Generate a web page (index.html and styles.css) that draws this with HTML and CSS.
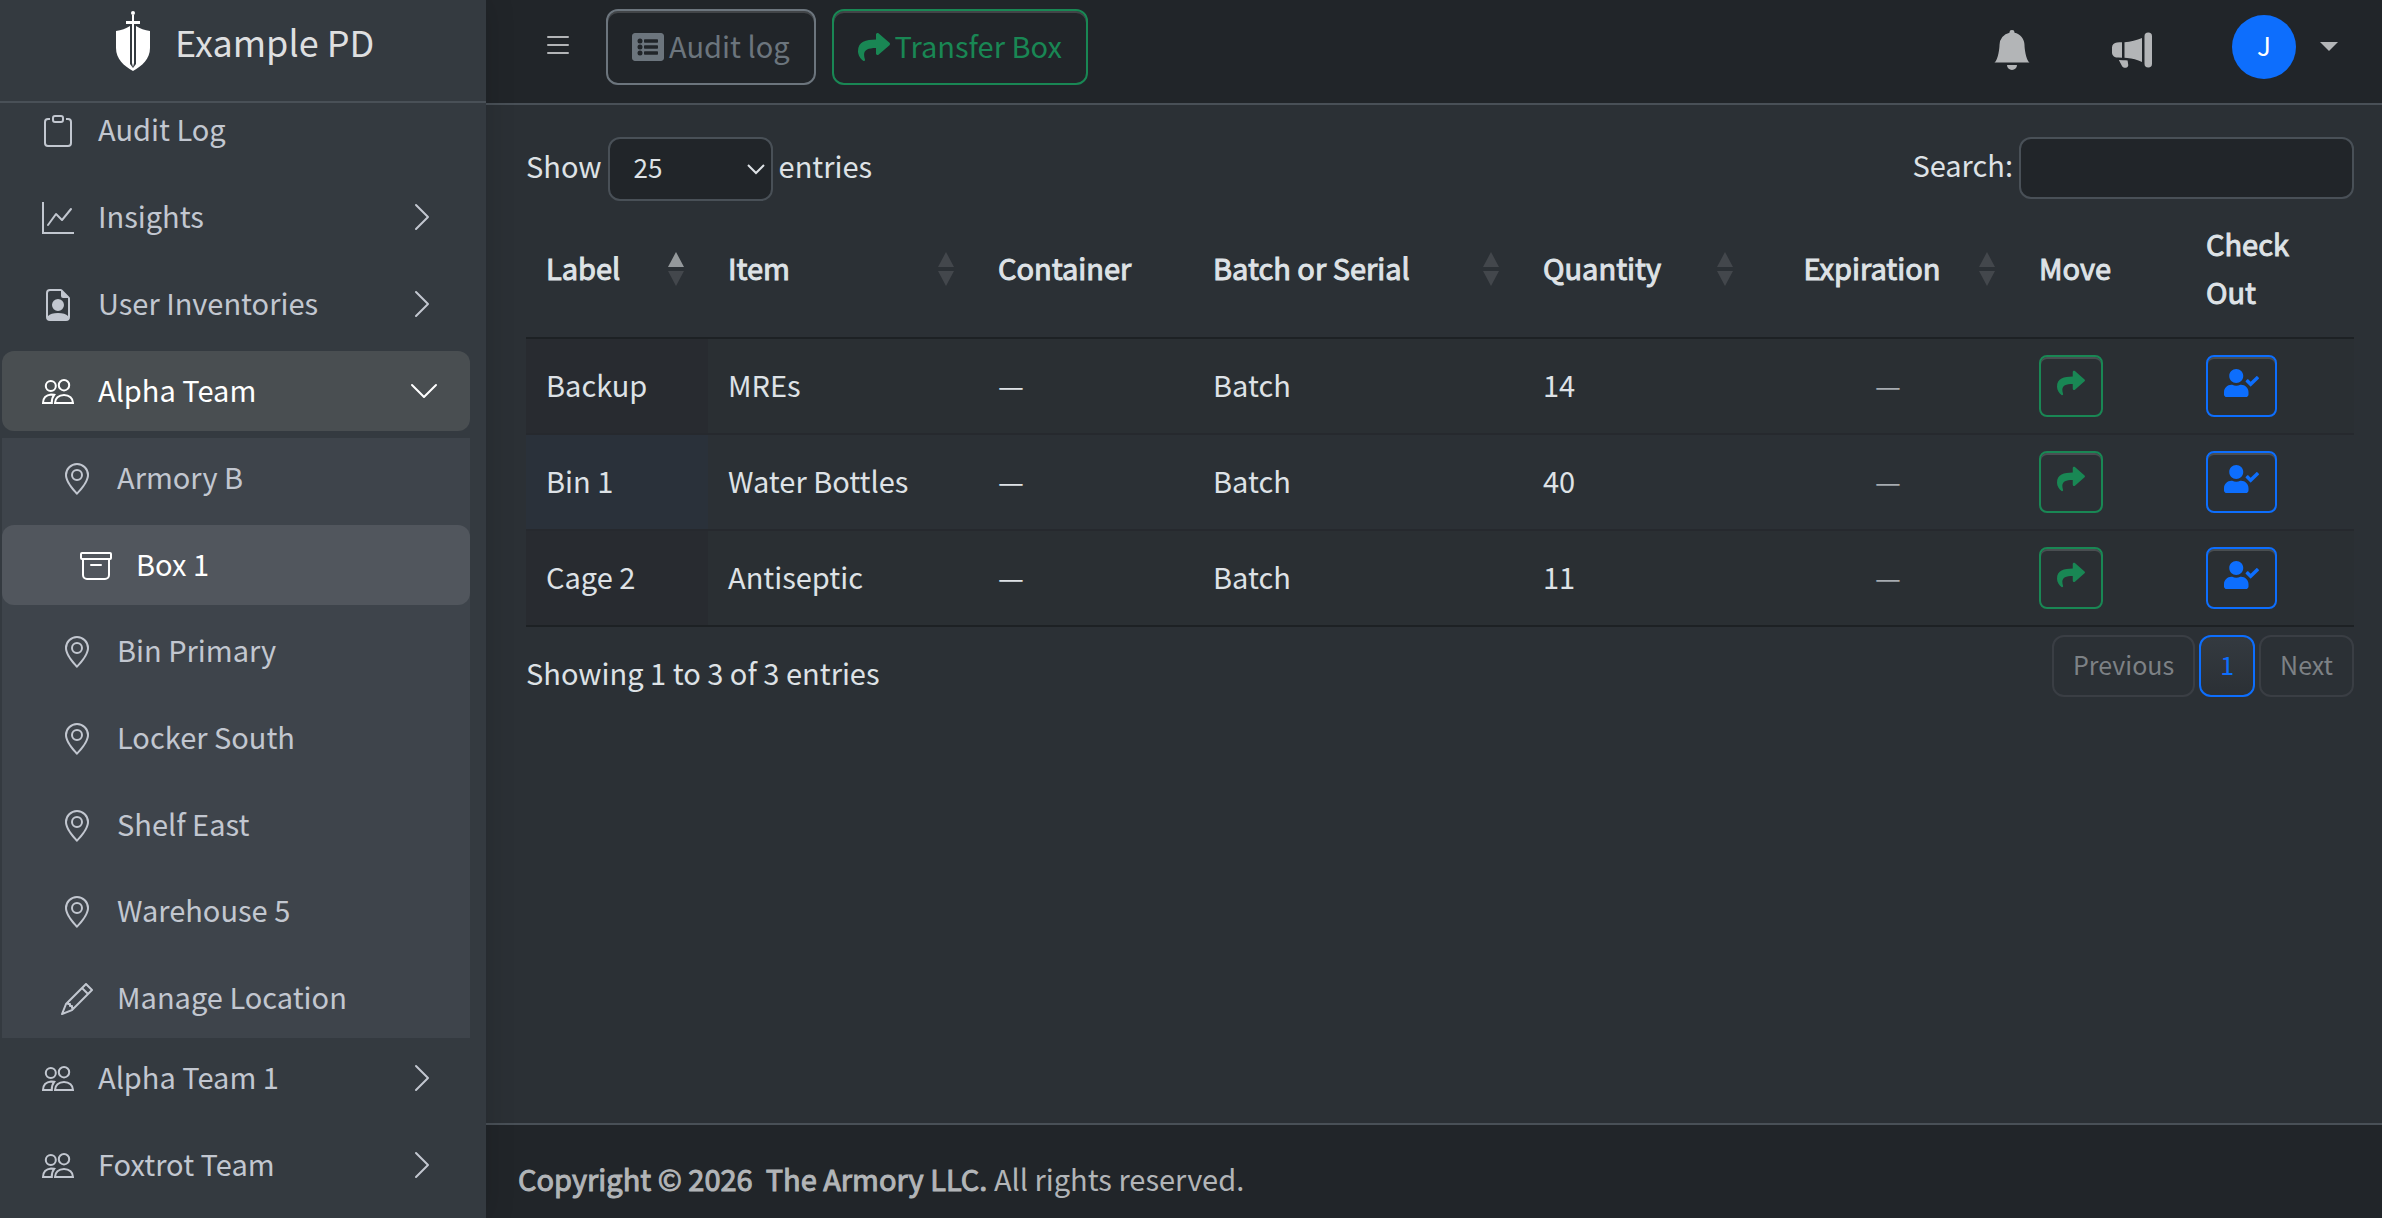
FILE: index.html
```html
<!DOCTYPE html>
<html lang="en">
<head>
<meta charset="utf-8">
<meta name="viewport" content="width=device-width, initial-scale=1">
<title>Box 1 - Example PD</title>
<link rel="stylesheet" href="styles.css">
</head>
<body>
<svg class="sprite" aria-hidden="true">
  <symbol id="chevron" viewBox="0 0 16 16"><path fill-rule="evenodd" d="M4.646 1.646a.5.5 0 0 1 .708 0l6 6a.5.5 0 0 1 0 .708l-6 6a.5.5 0 0 1-.708-.708L10.293 8 4.646 2.354a.5.5 0 0 1 0-.708"/></symbol>
  <symbol id="clipboard" viewBox="0 0 16 16"><path d="M4 1.5H3a2 2 0 0 0-2 2V14a2 2 0 0 0 2 2h10a2 2 0 0 0 2-2V3.500a2 2 0 0 0-2-2h-1v1h1a1 1 0 0 1 1 1V14a1 1 0 0 1-1 1H3a1 1 0 0 1-1-1V3.500a1 1 0 0 1 1-1h1z"/><path d="M9.500 1a.5.5 0 0 1 .5.5v1a.5.5 0 0 1-.5.5h-3a.5.5 0 0 1-.5-.5v-1a.5.5 0 0 1 .5-.5zm-3-1A1.500 1.500 0 0 0 5 1.500v1A1.500 1.500 0 0 0 6.500 4h3A1.500 1.500 0 0 0 11 2.500v-1A1.500 1.500 0 0 0 9.500 0z"/></symbol>
  <symbol id="graph" viewBox="0 0 16 16"><path fill-rule="evenodd" d="M0 0h1v15h15v1H0zm14.817 3.113a.5.5 0 0 1 .07.704l-4.500 5.500a.5.5 0 0 1-.74.037L7.060 6.767l-3.656 5.027a.5.5 0 0 1-.808-.588l4-5.500a.5.5 0 0 1 .758-.06l2.609 2.610 4.150-5.073a.5.5 0 0 1 .704-.07"/></symbol>
  <symbol id="file-person" viewBox="0 0 16 16"><path d="M9.293 0H4a2 2 0 0 0-2 2v12a2 2 0 0 0 2 2h8a2 2 0 0 0 2-2V4.707A1 1 0 0 0 13.707 4L10 .293A1 1 0 0 0 9.293 0M9.500 1v2.500a1 1 0 0 0 1 1H13v8.950C12.100 12.500 10.400 12 8 12s-4.100.5-5 1.450V2a1 1 0 0 1 1-1zM11 8a3 3 0 1 1-6 0 3 3 0 0 1 6 0" fill-rule="evenodd"/></symbol>
  <symbol id="people" viewBox="0 0 16 16"><g fill="none" stroke="currentColor"><circle cx="4.400" cy="5" r="2.500"/><circle cx="11" cy="4.600" r="2.600"/><path d="M6.500 13.500h9c0-2.200-1.800-4-4.500-4s-4.500 1.800-4.500 4zM4.900 13.500H.5c0-2.400 1.500-4.100 4-4.300.6 0 1.100.1 1.600.2-.8 1-1.300 2.500-1.200 4.100z"/></g></symbol>
  <symbol id="pin" viewBox="0 0 16 16"><path d="M12.166 8.940c-.524 1.062-1.234 2.120-1.960 3.070A32 32 0 0 1 8 14.580a32 32 0 0 1-2.206-2.570c-.726-.95-1.436-2.008-1.960-3.070C3.304 7.867 3 6.862 3 6a5 5 0 0 1 10 0c0 .862-.305 1.867-.834 2.940M8 16s6-5.686 6-10A6 6 0 0 0 2 6c0 4.314 6 10 6 10"/><path d="M8 8a2 2 0 1 1 0-4 2 2 0 0 1 0 4m0 1a3 3 0 1 0 0-6 3 3 0 0 0 0 6"/></symbol>
  <symbol id="archive" viewBox="0 0 16 16"><path d="M0 2a1 1 0 0 1 1-1h14a1 1 0 0 1 1 1v2a1 1 0 0 1-1 1v7.500a2.500 2.500 0 0 1-2.500 2.500h-9A2.500 2.500 0 0 1 1 12.500V5a1 1 0 0 1-1-1zm2 3v7.500A1.500 1.500 0 0 0 3.500 14h9a1.500 1.500 0 0 0 1.500-1.500V5zm13-3H1v2h14zM5 7.500a.5.5 0 0 1 .5-.5h5a.5.5 0 0 1 0 1h-5a.5.5 0 0 1-.5-.5"/></symbol>
  <symbol id="pencil" viewBox="0 0 16 16"><path d="M12.146.146a.5.5 0 0 1 .708 0l3 3a.5.5 0 0 1 0 .708l-10 10a.5.5 0 0 1-.168.110l-5 2a.5.5 0 0 1-.65-.65l2-5a.5.5 0 0 1 .110-.168zM11.207 2.500 13.500 4.793 14.793 3.500 12.500 1.207zm1.586 3L10.500 3.207 4 9.707V10h.5a.5.5 0 0 1 .5.5v.5h.5a.5.5 0 0 1 .5.5v.5h.293zm-9.761 5.175-.106.106-1.528 3.821 3.821-1.528.106-.106A.5.5 0 0 1 5 12.500V12h-.5a.5.5 0 0 1-.5-.5V11h-.5a.5.5 0 0 1-.468-.325"/></symbol>
  <symbol id="list" viewBox="0 0 16 16"><path fill-rule="evenodd" d="M2.500 12a.5.5 0 0 1 .5-.5h10a.5.5 0 0 1 0 1H3a.5.5 0 0 1-.5-.5m0-4a.5.5 0 0 1 .5-.5h10a.5.5 0 0 1 0 1H3a.5.5 0 0 1-.5-.5m0-4a.5.5 0 0 1 .5-.5h10a.5.5 0 0 1 0 1H3a.5.5 0 0 1-.5-.5"/></symbol>
  <symbol id="bell" viewBox="0 0 16 16"><path d="M8 16a2 2 0 0 0 2-2H6a2 2 0 0 0 2 2m.995-14.901a1 1 0 1 0-1.990 0A5 5 0 0 0 3 6c0 1.098-.5 6-2 7h14c-1.500-1-2-5.902-2-7 0-2.420-1.720-4.440-4.005-4.901"/></symbol>
  <symbol id="megaphone" viewBox="0 0 16 16"><path d="M13 2.500a1.500 1.500 0 0 1 3 0v11a1.500 1.500 0 0 1-3 0zm-1 .724c-2.067.95-4.539 1.481-7 1.656v6.237a25 25 0 0 1 1.088.085c2.053.204 4.038.668 5.912 1.560zm-8 7.841V4.934c-.68.027-1.399.043-2.008.053A2.020 2.020 0 0 0 0 7v2c0 1.106.896 1.996 1.994 2.009l.496.008a64 64 0 0 1 1.510.048m1.390 1.081q.428.032.85.078l.253 1.690a1 1 0 0 1-.983 1.187h-.548a1 1 0 0 1-.916-.599l-1.314-2.480a66 66 0 0 1 1.692.064q.491.026.966.060"/></symbol>
  <symbol id="list-alt" viewBox="0 0 512 512"><path fill-rule="evenodd" d="M464 480H48c-26.510 0-48-21.490-48-48V80c0-26.510 21.490-48 48-48h416c26.510 0 48 21.490 48 48v352c0 26.510-21.490 48-48 48zM128 120a40 40 0 1 0 0 80 40 40 0 0 0 0-80zm0 96a40 40 0 1 0 0 80 40 40 0 0 0 0-80zm0 96a40 40 0 1 0 0 80 40 40 0 0 0 0-80zM204 132a12 12 0 0 0-12 12v32a12 12 0 0 0 12 12h200a12 12 0 0 0 12-12v-32a12 12 0 0 0-12-12zm0 96a12 12 0 0 0-12 12v32a12 12 0 0 0 12 12h200a12 12 0 0 0 12-12v-32a12 12 0 0 0-12-12zm0 96a12 12 0 0 0-12 12v32a12 12 0 0 0 12 12h200a12 12 0 0 0 12-12v-32a12 12 0 0 0-12-12z"/></symbol>
  <symbol id="share" viewBox="0 0 512 512"><path d="M503.691 189.836L327.687 37.851C312.281 24.546 288 35.347 288 56.015v80.053C127.371 137.907 0 170.100 0 322.326c0 61.441 39.581 122.309 83.333 154.132 13.653 9.931 33.111-2.533 28.077-18.631C66.066 312.814 132.917 274.316 288 272.085V360c0 20.700 24.300 31.453 39.687 18.164l176.004-152c11.071-9.562 11.086-26.753 0-36.328z"/></symbol>
  <symbol id="user-check" viewBox="0 0 640 512"><path d="M224 256c70.700 0 128-57.300 128-128S294.700 0 224 0 96 57.300 96 128s57.300 128 128 128zm89.600 32h-16.700c-22.200 10.200-46.900 16-72.900 16s-50.600-5.800-72.900-16h-16.700C60.200 288 0 348.200 0 422.400V464c0 26.500 21.500 48 48 48h352c26.500 0 48-21.500 48-48v-41.600c0-74.200-60.200-134.400-134.400-134.400zm323-128.400l-27.800-28.100c-4.600-4.700-12.100-4.700-16.800-.1l-104.800 104-45.500-45.800c-4.600-4.700-12.100-4.700-16.800-.1l-28.100 27.900c-4.700 4.600-4.700 12.100-.1 16.800l81.700 82.300c4.600 4.700 12.100 4.700 16.800.1l141.300-140.200c4.600-4.700 4.700-12.200.1-16.800z"/></symbol>
</svg>

<div class="app">
  <aside class="sidebar">
    <a class="brand" href="#">
      <svg class="brand-logo" viewBox="0 0 36 60" aria-hidden="true">
        <path d="M1 20Q9 19 15 15v38l3 4 3-4V15q6 4 14 5v17c0 11-8 18-17 23C9 55 1 48 1 37z"/>
        <path d="M17 4h2v6h6v3h-6v39l-1 4-1-4V13h-6v-3h6z"/><circle cx="18" cy="2" r="2"/>
      </svg>
      <span>Example PD</span>
    </a>
    <nav class="menu-wrap" aria-label="Main">
      <ul class="menu">
        <li><a class="link" href="#"><svg class="icon"><use href="#clipboard"/></svg><span>Audit Log</span></a></li>
        <li><a class="link" href="#"><svg class="icon"><use href="#graph"/></svg><span>Insights</span><svg class="icon arrow"><use href="#chevron"/></svg></a></li>
        <li><a class="link" href="#"><svg class="icon"><use href="#file-person"/></svg><span>User Inventories</span><svg class="icon arrow"><use href="#chevron"/></svg></a></li>
        <li>
          <a class="link open" href="#"><svg class="icon"><use href="#people"/></svg><span>Alpha Team</span><svg class="icon arrow"><use href="#chevron"/></svg></a>
          <ul class="submenu">
            <li><a class="link" href="#"><svg class="icon"><use href="#pin"/></svg><span>Armory B</span></a></li>
            <li><a class="link nested active" href="#"><svg class="icon"><use href="#archive"/></svg><span>Box 1</span></a></li>
            <li><a class="link" href="#"><svg class="icon"><use href="#pin"/></svg><span>Bin Primary</span></a></li>
            <li><a class="link" href="#"><svg class="icon"><use href="#pin"/></svg><span>Locker South</span></a></li>
            <li><a class="link" href="#"><svg class="icon"><use href="#pin"/></svg><span>Shelf East</span></a></li>
            <li><a class="link" href="#"><svg class="icon"><use href="#pin"/></svg><span>Warehouse 5</span></a></li>
            <li><a class="link" href="#"><svg class="icon"><use href="#pencil"/></svg><span>Manage Location</span></a></li>
          </ul>
        </li>
        <li><a class="link" href="#"><svg class="icon"><use href="#people"/></svg><span>Alpha Team 1</span><svg class="icon arrow"><use href="#chevron"/></svg></a></li>
        <li><a class="link" href="#"><svg class="icon"><use href="#people"/></svg><span>Foxtrot Team</span><svg class="icon arrow"><use href="#chevron"/></svg></a></li>
      </ul>
    </nav>
  </aside>

  <div class="page">
    <header class="topbar">
      <button class="icon-btn toggle" type="button" aria-label="Toggle sidebar"><svg class="icon"><use href="#list"/></svg></button>
      <button class="btn btn-secondary" type="button"><svg class="icon"><use href="#list-alt"/></svg>Audit log</button>
      <button class="btn btn-success" type="button"><svg class="icon"><use href="#share"/></svg>Transfer Box</button>
      <div class="tools">
        <button class="icon-btn" type="button" aria-label="Notifications"><svg class="icon-lg"><use href="#bell"/></svg></button>
        <button class="icon-btn" type="button" aria-label="Announcements"><svg class="icon-lg"><use href="#megaphone"/></svg></button>
        <button class="icon-btn user" type="button" aria-label="Account"><span class="avatar">J</span><span class="caret"></span></button>
      </div>
    </header>

    <main class="content">
      <div class="controls">
        <label class="field"><span>Show</span>
          <select class="length">
            <option>10</option>
            <option selected>25</option>
            <option>50</option>
          </select>
          <span>entries</span></label>
        <label class="field"><span>Search:</span>
          <input class="search" type="search"></label>
      </div>

      <table class="items">
        <colgroup>
          <col class="c-label"><col class="c-item"><col class="c-container"><col class="c-batch">
          <col class="c-quantity"><col class="c-expiration"><col class="c-move"><col class="c-checkout">
        </colgroup>
        <thead>
          <tr>
            <th class="sort asc">Label</th>
            <th class="sort">Item</th>
            <th>Container</th>
            <th class="sort">Batch or Serial</th>
            <th class="sort">Quantity</th>
            <th class="sort center">Expiration</th>
            <th>Move</th>
            <th>Check Out</th>
          </tr>
        </thead>
        <tbody>
          <tr>
            <td>Backup</td><td>MREs</td><td>—</td><td>Batch</td><td>14</td><td class="center muted">—</td>
            <td class="action"><button class="btn-sm btn-success" type="button" aria-label="Move"><svg class="icon-sm"><use href="#share"/></svg></button></td>
            <td class="action"><button class="btn-sm btn-primary" type="button" aria-label="Check out"><svg class="icon-sm wide"><use href="#user-check"/></svg></button></td>
          </tr>
          <tr>
            <td>Bin 1</td><td>Water Bottles</td><td>—</td><td>Batch</td><td>40</td><td class="center muted">—</td>
            <td class="action"><button class="btn-sm btn-success" type="button" aria-label="Move"><svg class="icon-sm"><use href="#share"/></svg></button></td>
            <td class="action"><button class="btn-sm btn-primary" type="button" aria-label="Check out"><svg class="icon-sm wide"><use href="#user-check"/></svg></button></td>
          </tr>
          <tr>
            <td>Cage 2</td><td>Antiseptic</td><td>—</td><td>Batch</td><td>11</td><td class="center muted">—</td>
            <td class="action"><button class="btn-sm btn-success" type="button" aria-label="Move"><svg class="icon-sm"><use href="#share"/></svg></button></td>
            <td class="action"><button class="btn-sm btn-primary" type="button" aria-label="Check out"><svg class="icon-sm wide"><use href="#user-check"/></svg></button></td>
          </tr>
        </tbody>
      </table>

      <div class="table-foot">
        <p class="info">Showing 1 to 3 of 3 entries</p>
        <div class="pages">
          <button class="page-btn" type="button" disabled>Previous</button>
          <button class="page-btn current" type="button">1</button>
          <button class="page-btn" type="button" disabled>Next</button>
        </div>
      </div>
    </main>

    <footer class="footer"><strong>Copyright © 2026 &nbsp;The Armory LLC.</strong> All rights reserved.</footer>
  </div>
</div>
</body>
</html>
```
FILE: styles.css
```css
* {
  box-sizing: border-box;
}

body {
  margin: 0;
  background: #2b3035;
  color: #dee2e6;
  font: 29px/48px "Noto Sans CJK SC", "Noto Sans", sans-serif;
}

button,
input,
select {
  margin: 0;
  font: inherit;
  color: inherit;
}

button {
  background: none;
  cursor: pointer;
}

a {
  color: inherit;
  text-decoration: none;
}

ul,
p {
  margin: 0;
  padding: 0;
  list-style: none;
}

svg {
  fill: currentColor;
  flex: none;
}

/* Emphasis thickens the regular cut, so widths stay the same */
strong,
th {
  font-weight: normal;
  -webkit-text-stroke: 1px currentColor;
}

.sprite {
  display: none;
}

.icon {
  width: 32px;
  height: 32px;
}

.icon-lg {
  width: 40px;
  height: 40px;
  margin-top: 6px;
}

.icon-sm {
  width: 28px;
  height: 28px;
}

.icon-sm.wide {
  width: 35px;
}

.app {
  display: flex;
  height: 100vh;
  overflow: hidden;
}

/* Sidebar */
.sidebar {
  position: relative;
  flex: none;
  display: flex;
  flex-direction: column;
  width: 486px;
  background: #343a40;
  color: #c2c7d0;
  box-shadow: 0 0 28px rgba(0, 0, 0, 0.15);
}

.brand {
  flex: none;
  display: flex;
  align-items: center;
  gap: 24px;
  height: 103px;
  padding: 0 16px 20px 115px;
  border-bottom: 2px solid #495057;
  color: #dedfe0;
  font-size: 36px;
}

.brand-logo {
  width: 36px;
  height: 60px;
  fill: #fff;
}

.menu-wrap {
  flex: 1;
  min-height: 0;
  overflow: hidden;
  padding: 0 16px 0 2px;
}

.menu {
  margin-top: -13px;
}

.link {
  display: flex;
  align-items: center;
  height: 80px;
  margin-bottom: 7px;
  padding: 0 32px 0 40px;
  border-radius: 12px;
}

.link .icon:first-child {
  margin-top: 2px;
}

.link span {
  margin-left: 24px;
  padding-bottom: 4px;
}

.arrow {
  margin-left: auto;
}

.open {
  background: #494e51;
  color: #fff;
  padding-right: 30px;
}

.open .arrow {
  transform: rotate(90deg);
}

.submenu {
  display: flex;
  flex-direction: column;
  justify-content: space-between;
  min-height: 600px;
  background: #3e444b;
}

.submenu .link {
  margin-bottom: 0;
  padding-left: 59px;
}

.submenu .nested {
  padding-left: 78px;
}

.submenu .active {
  background: #51565d;
  color: #fff;
}

/* Page */
.page {
  flex: 1;
  min-width: 0;
  display: flex;
  flex-direction: column;
}

.topbar {
  display: flex;
  align-items: center;
  gap: 16px;
  height: 105px;
  padding: 0 44px 10px 40px;
  border-bottom: 2px solid #495057;
  background: #212529;
}

.icon-btn {
  display: flex;
  align-items: center;
  padding: 0;
  border: 0;
  color: #b3b5b7;
}

.toggle {
  padding: 0 16px 4px;
}

.btn {
  display: flex;
  align-items: center;
  gap: 5px;
  height: 76px;
  padding: 0 24px 4px;
  border: 2px solid;
  border-radius: 12px;
  box-shadow: inset 0 2px 0 rgba(255, 255, 255, 0.15);
}

.btn .icon {
  margin-top: 4px;
}

.btn-secondary {
  color: #6c757d;
  border-color: #6c757d;
}

.btn-success {
  color: #198754;
  border-color: #198754;
}

.btn-primary {
  color: #0d6efd;
  border-color: #0d6efd;
}

.tools {
  display: flex;
  align-items: center;
  gap: 80px;
  margin-left: auto;
}

.user {
  gap: 24px;
}

.avatar {
  width: 64px;
  height: 64px;
  border-radius: 50%;
  background: #0d6efd;
  color: #fff;
  font-size: 26px;
  line-height: 60px;
  text-align: center;
}

.caret {
  border: 9px solid transparent;
  border-top-color: currentColor;
  border-bottom: 0;
}

.content {
  flex: 1;
  padding: 32px 28px 0 40px;
}

.controls {
  display: flex;
  justify-content: space-between;
  align-items: flex-start;
}

.field {
  display: flex;
  align-items: center;
  gap: 6px;
}

.field span {
  padding-bottom: 8px;
}

.length,
.search {
  border: 2px solid #495057;
  border-radius: 12px;
  background-color: #212529;
}

.length {
  width: 165px;
  height: 64px;
  padding: 0 24px 4px;
  appearance: none;
  font-size: 26px;
  background-image: url("data:image/svg+xml,%3Csvg xmlns='http://www.w3.org/2000/svg' viewBox='0 0 18 12'%3E%3Cpath d='M1 2l8 8 8-8' fill='none' stroke='%23dee2e6' stroke-width='2'/%3E%3C/svg%3E");
  background-repeat: no-repeat;
  background-position: right 6px center;
  background-size: 18px 12px;
}

.search {
  width: 335px;
  height: 62px;
  padding: 0 16px;
}

/* Items table */
.items {
  width: 100%;
  table-layout: fixed;
  border-collapse: separate;
  border-spacing: 0;
}

.c-label { width: 182px; }
.c-item { width: 270px; }
.c-container { width: 215px; }
.c-batch { width: 330px; }
.c-quantity { width: 234px; }
.c-expiration { width: 262px; }
.c-move { width: 167px; }
.c-checkout { width: 168px; }

.items th {
  padding: 18px 52px 22px 20px;
  border-bottom: 2px solid #1d2124;
  text-align: left;
  white-space: nowrap;
}

.items th:last-child {
  white-space: normal;
}

.sort {
  background: url("data:image/svg+xml,%3Csvg xmlns='http://www.w3.org/2000/svg' viewBox='0 0 16 34' fill='%2343474c'%3E%3Cpath d='M8 0l8 15H0zM8 34l8-15H0z'/%3E%3C/svg%3E") no-repeat right 24px center / 16px 34px;
}

.sort.asc {
  background-image: url("data:image/svg+xml,%3Csvg xmlns='http://www.w3.org/2000/svg' viewBox='0 0 16 34' fill='%2343474c'%3E%3Cpath fill='%2395999c' d='M8 0l8 15H0z'/%3E%3Cpath d='M8 34l8-15H0z'/%3E%3C/svg%3E");
}

.items td {
  height: 96px;
  padding: 0 20px 4px;
  border-bottom: 2px solid #26292e;
}

.items .action {
  padding-bottom: 0;
}

.items tbody tr:last-child td {
  border-bottom-color: #1d2124;
}

.items tbody tr:nth-child(odd) {
  background: #2a2f33;
}

.items tbody tr td:first-child {
  background: #282b30;
}

.items tbody tr:nth-child(even) td:first-child {
  background: #2a313a;
}

.items .center {
  text-align: center;
}

.muted {
  color: #a7acb1;
}

.btn-sm {
  display: flex;
  align-items: center;
  height: 62px;
  padding: 0 16px 6px;
  border: 2px solid;
  border-radius: 8px;
  box-shadow: inset 0 2px 0 rgba(255, 255, 255, 0.15);
}

.btn-sm.btn-success {
  color: #198754;
}

.btn-sm.btn-primary {
  color: #0d6efd;
}

.table-foot {
  display: flex;
  justify-content: space-between;
  align-items: flex-start;
  padding-top: 8px;
}

.info {
  padding-top: 13px;
}

.pages {
  display: flex;
  gap: 4px;
}

.page-btn {
  height: 62px;
  padding: 0 19px 4px;
  border: 2px solid #3a3e44;
  border-radius: 12px;
  color: #7d8185;
  font-size: 25px;
}

.page-btn.current {
  border-color: #0d6efd;
  background: linear-gradient(#343a40, #2b3035);
  color: #0d6efd;
}

.footer {
  height: 95px;
  padding: 29px 32px;
  border-top: 2px solid #495057;
  background: #212529;
  color: #b2b5b8;
}
```
